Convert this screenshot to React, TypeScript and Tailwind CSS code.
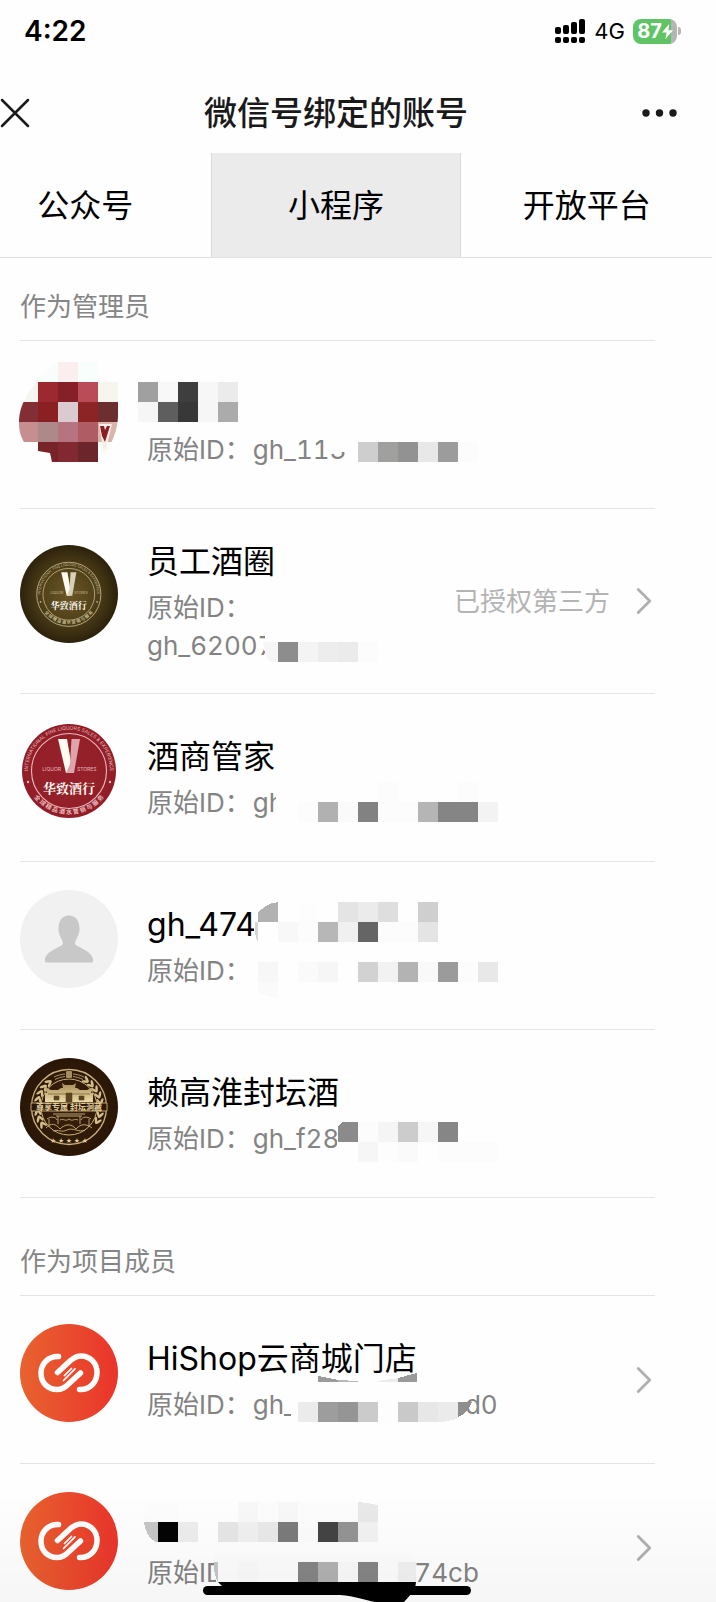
import React, { useState } from 'react';
import { ChevronRight } from 'lucide-react';

const TABS = ['公众号', '小程序', '开放平台'];

// 打码色块：每格 20px，空字符串代表跳过
type Strip = { x: number; y: number; colors: string[] };

function Mosaic({ strips, children }: { strips: Strip[]; children?: React.ReactNode }) {
  return (
    <svg className="absolute top-0 left-0 w-[520px] h-[168px] overflow-visible pointer-events-none" aria-hidden="true" shapeRendering="crispEdges">
      {children}
      {strips.map((s, i) =>
        s.colors.map((c, j) => c && <rect key={`${i}-${j}`} x={s.x + j * 20} y={s.y} width={20} height={20} fill={c} />)
      )}
    </svg>
  );
}

const AVATAR_STRIPS: Strip[] = [
  { x: -2, y: -7, colors: ['#fdfdfa', '#f8fdfb', '#faeeee', '#f8fefb', '#fefefe'] },
  { x: -2, y: 13, colors: ['#f6f5ef', '#9c2830', '#852028', '#b94c57', '#f6f5ee'] },
  { x: -2, y: 33, colors: ['#822e32', '#8b2023', '#dacbd0', '#8c2325', '#6d2e30'] },
  { x: -2, y: 53, colors: ['#c68e8f', '#ae8989', '#b5747f', '#af5d63', '#d9b5ad'] },
  { x: -2, y: 73, colors: ['', '#782327', '#812830', '#6c262b', '#fbfaf5'] },
];

function PixelAvatar() {
  return (
    <svg viewBox="0 0 98 98" className="size-[98px] overflow-visible" aria-hidden="true">
      <clipPath id="pixel-clip">
        <path d="M37 -7C25 1 16 13 9 23C2 34 -1 43 -1 54C-1 62 1 68 4 73H18V82L30 84L32 93H78V73L84 86C92 75 98 60 98 47V-7Z" />
      </clipPath>
      <g clipPath="url(#pixel-clip)">
        {AVATAR_STRIPS.map((s) =>
          s.colors.map((c, j) => c && <rect key={`${s.y}-${j}`} x={s.x + j * 20} y={s.y} width={20} height={20} fill={c} shapeRendering="crispEdges" />)
        )}
        <path d="M79 55H92L86 80H83Z" fill="#f7efe8" />
        <path d="M80 57H84L85 61L87 57H90L85 73L82 67Z" fill="#8b1d27" />
      </g>
    </svg>
  );
}

// 华致酒行徽标，深色和红色两版共用
function WineLogo({ dark }: { dark?: boolean }) {
  const id = dark ? 'dark' : 'red';
  const line = dark ? '#c9bd95' : '#e8b9bc';
  return (
    <svg viewBox="0 0 98 98" className="size-[98px]" role="img" aria-label="华致酒行">
      <defs>
        <radialGradient id={`bg-${id}`}>
          <stop offset="0" stopColor={dark ? '#6a5727' : '#96202b'} />
          <stop offset="0.55" stopColor={dark ? '#514119' : '#94202a'} />
          <stop offset="1" stopColor={dark ? '#2c220c' : '#921d27'} />
        </radialGradient>
        <path id={`top-${id}`} d="M8.500 55A41 41 0 1 1 89.500 55" />
        <path id={`bottom-${id}`} d="M8 65A44.500 44.500 0 0 0 90 65" />
      </defs>
      {dark ? <circle cx="49" cy="49" r="49" fill={`url(#bg-${id})`} /> : <circle cx="49" cy="49" r="47" fill={`url(#bg-${id})`} />}
      <g transform={dark ? 'translate(15 15.500) scale(0.69)' : undefined}>
        {dark && <circle cx="49" cy="49" r="46.500" fill="none" stroke={line} strokeWidth="1.200" />}
        <circle cx="49" cy="49" r="37.500" fill="none" stroke={line} strokeWidth="1.100" />
        <text fontSize="5" fill={line}>
          <textPath href={`#top-${id}`} startOffset="50%" textAnchor="middle">INTERNATIONAL FINE LIQUORS SALES &amp; EXPERIENCE</textPath>
        </text>
        <text fontSize="6" fill={line} className="font-bold">
          <textPath href={`#bottom-${id}`} startOffset="50%" textAnchor="middle">全 球 精 品 酒 水 营 销 与 服 务</textPath>
        </text>
        <circle cx="8" cy="60" r="1.200" fill={line} />
        <circle cx="90" cy="60" r="1.200" fill={line} />
        <path d="M38 17H47L51 40V51H46Z" fill="#fffaf2" />
        <path d="M51.500 17H60L54 51H46L50 42Z" fill={dark ? '#d8d0b4' : '#dfa3ab'} />
        <text x="41" y="49" fontSize="5" textAnchor="end" fill={line}>LIQUOR</text>
        <text x="57" y="49" fontSize="5" fill={line}>STORES</text>
        <text x="49" y="71" fontSize="13" textAnchor="middle" fill="#fffaf2" className="font-['Noto_Serif_CJK_SC','Noto_Sans_CJK_SC',serif] font-bold">华致酒行</text>
      </g>
    </svg>
  );
}

function DefaultAvatar() {
  return (
    <svg viewBox="0 0 98 98" className="size-[98px]" aria-hidden="true">
      <circle cx="49" cy="49" r="49" fill="#f1f1f1" />
      <path d="M49 25.500C42 25.500 38.500 31 38.500 39C38.500 46 43 50 43 53.500C43 57 26 60 25 69.500C24.800 72.500 25.500 72.500 27 72.500H71C72.500 72.500 73.200 72.500 73 69.500C72 60 55 57 55 53.500C55 50 59.500 46 59.500 39C59.500 31 56 25.500 49 25.500Z" fill="#c8c8c8" />
    </svg>
  );
}

function PavilionLogo() {
  // 麦穗叶片沿圆环左右对称排列
  const leaves = [150, 162, 174, 186, 198, 210, 222, 234];
  return (
    <svg viewBox="0 0 98 98" className="size-[98px]" role="img" aria-label="赖高淮封坛酒">
      <defs>
        <radialGradient id="brown">
          <stop offset="0" stopColor="#3a220c" />
          <stop offset="1" stopColor="#2a1606" />
        </radialGradient>
        <linearGradient id="gold" x2="0" y2="1">
          <stop offset="0" stopColor="#a78b57" />
          <stop offset="1" stopColor="#eadba6" />
        </linearGradient>
      </defs>
      <circle cx="49" cy="49" r="49" fill="url(#brown)" />
      <g fill="none" stroke="#c9b07a">
        <circle cx="49" cy="49" r="37.500" strokeWidth="1.300" />
        <circle cx="49" cy="49" r="28" strokeWidth="1" />
        <path d="M34 19C38 17 41 16.500 45 16M35 21.500C39 19.500 42 19 45 18.500M64 19C60 17 57 16.500 53 16M63 21.500C59 19.500 56 19 53 18.500" strokeWidth="0.800" />
      </g>
      {leaves.map((a) => (
        <g key={a} fill="#d3bd88">
          <g transform={`rotate(${a} 49 49)`}>
            <ellipse cx="82" cy="47" rx="1.300" ry="3.600" transform="rotate(28 82 47)" />
            <ellipse cx="79" cy="47" rx="1.200" ry="3.400" transform="rotate(-28 79 47)" />
          </g>
          <g transform={`rotate(${180 - a} 49 49)`}>
            <ellipse cx="82" cy="47" rx="1.300" ry="3.600" transform="rotate(-152 82 47)" />
            <ellipse cx="79" cy="47" rx="1.200" ry="3.400" transform="rotate(152 79 47)" />
          </g>
        </g>
      ))}
      <path d="M46 13H52V20H46ZM48 14V19M50 14V19" fill="#d3bd88" stroke="#3a220c" strokeWidth="0.600" />
      <path d="M42 25L45 27H53L56 25L55 30H43Z M25 29L31 32H38L41 30H57L60 32H67L73 29L71 35H73V44H25V35H27Z" fill="url(#gold)" />
      <path d="M46 35H52V44H46ZM34 38H39V42H34ZM59 38H64V42H59Z M28 36H70" fill="#5b4320" stroke="#5b4320" strokeWidth="0.600" />
      <path d="M11 45H87V53H11Z" fill="#2c1708" stroke="#c9b07a" strokeWidth="0.900" />
      <text x="49" y="52" fontSize="8" textAnchor="middle" fill="#e3d09b" className="font-bold">尊享专属 封坛洞藏</text>
      <g fill="none" stroke="#c9b07a" strokeWidth="0.900">
        <path d="M33 56H65M36 58H62M38 58V66M60 58V66M27 61C31 58 36 59 37 62M71 61C67 58 62 59 61 62M40 62C44 60 45 64 49 61C53 64 54 60 58 62M29 61V69M69 61V69" />
        <path d="M26 70C31 64 36 66 40 71C45 66 51 65 56 71C61 65 67 66 72 70M33 73C39 71 41 75 47 72C53 69 59 75 65 72" />
      </g>
      <text x="49" y="85" fontSize="6" textAnchor="middle" fill="#e3d09b">★ ★ ★ ★ ★</text>
    </svg>
  );
}

function HiShopLogo() {
  return (
    <svg viewBox="0 0 98 98" className="size-[98px]" role="img" aria-label="HiShop">
      <defs>
        <linearGradient id="hishop">
          <stop offset="0" stopColor="#e8632f" />
          <stop offset="1" stopColor="#ea342b" />
        </linearGradient>
      </defs>
      <circle cx="49" cy="49" r="49" fill="url(#hishop)" />
      <g fill="none" stroke="#fff" strokeLinecap="round" strokeLinejoin="round">
        <path d="M38.500 32.500C28 32 21 40 21 49C21 59 28 65.500 37 65.500C42 65.500 44.500 64 47.500 61L60.500 49" strokeWidth="5.500" />
        <path d="M59.500 65.500C70 66 77 58 77 48.500C77 39 70 32 61 32C56 32 53.500 34 50.500 36.500L37.500 48.500" strokeWidth="5.500" />
        <path d="M43.500 56.500L55 44.800" strokeWidth="1.700" />
        <path d="M44.500 51.500L51.500 44.500" strokeWidth="1.700" />
      </g>
    </svg>
  );
}

type Account = {
  key: string;
  avatar: React.ReactNode;
  title?: string;
  wxid: React.ReactNode;
  note?: string;
  link?: boolean;
  wrap?: boolean;
  mask: React.ReactNode;
};

const admins: Account[] = [
  {
    key: 'a1',
    avatar: <PixelAvatar />,
    wxid: 'gh_113',
    mask: (
      <Mosaic
        strips={[
          { x: 118, y: 41, colors: ['#a0a0a0', '#f8f8f8', '#3e3e3e', '#f7f7f7', '#ebebeb'] },
          { x: 118, y: 61, colors: ['#f6f6f6', '#5e5e5e', '#383838', '#f6f6f6', '#ababab'] },
          { x: 338, y: 101, colors: ['#cecece', '#a0a09f', '#929292', '#e8e8e8', '#9c9c9c', '#fcfcfc'] },
        ]}
      >
        <path d="M309 92H350V111H314L309 106Z" fill="#fefefe" />
      </Mosaic>
    ),
  },
  {
    key: 'a2',
    avatar: <WineLogo dark />,
    title: '员工酒圈',
    wxid: 'gh_62007',
    note: '已授权第三方',
    link: true,
    wrap: true,
    mask: (
      <Mosaic strips={[{ x: 258, y: 133, colors: ['#8d8d8d', '#f4f4f4', '#ededed', '#ebebeb', '#fcfcfc'] }]}>
        <path d="M245 124H262V160H245Z" fill="#fefefe" />
        <path d="M243 133H258V153H250C246 149 244 142 243 133Z" fill="#f6f6f6" />
      </Mosaic>
    ),
  },
  {
    key: 'a3',
    avatar: <WineLogo />,
    title: '酒商管家',
    wxid: 'gh_',
    mask: (
      <Mosaic
        strips={[
          { x: 338, y: 88, colors: ['', '#fcfcfc', '', '', '', '#fcfcfc'] },
          { x: 278, y: 108, colors: ['#fcfcfc', '#b1b1b1', '#fafafa', '#828282', '#fcfcfc', '#fcfcfc', '#b5b5b5', '#858585', '#858585', '#f3f3f3'] },
        ]}
      >
        <path d="M256 88H300V130H256Z" fill="#fefefe" />
      </Mosaic>
    ),
  },
  {
    key: 'a4',
    avatar: <DefaultAvatar />,
    title: 'gh_474',
    wxid: '',
    mask: (
      <Mosaic
        strips={[
          { x: 258, y: 40, colors: ['', '#fdfdfd', '', '#e4e4e4', '#ebebeb', '#dedede', '', '#cfcfcf'] },
          { x: 238, y: 60, colors: ['#fefefe', '#f8f8f8', '#fcfcfc', '#b7b7b7', '#f0f0f0', '#656565', '#fcfcfc', '#fcfcfc', '#e4e4e4'] },
          { x: 238, y: 100, colors: ['#f7f7f7', '', '#fafafa', '#f6f6f6', '', '#d2d2d2', '#f2f2f2', '#b3b3b3', '#f9f9f9', '#9b9b9b', '#fcfcfc', '#e8e8e8'] },
        ]}
      >
        <path d="M234 40H260V84H234Z" fill="#fefefe" />
        <path d="M238 60V51C243 45 249 41 258 40V60Z" fill="#b1b1b1" />
        <path d="M235 60H238V80C235 75 234 68 235 60Z" fill="#d5d5d5" />
        <path d="M238 120H258V136C250 135 244 133 238 130Z" fill="#fafafa" />
      </Mosaic>
    ),
  },
  {
    key: 'a5',
    avatar: <PavilionLogo />,
    title: '赖高淮封坛酒',
    wxid: 'gh_f28',
    mask: (
      <Mosaic
        strips={[
          { x: 338, y: 92, colors: ['#fcfcfc', '#f5f5f5', '#cccccc', '#f6f6f6', '#868686'] },
          { x: 338, y: 112, colors: ['#f6f6f6', '#fdfdfd', '#fafafa', '', '#fcfcfc', '#fcfcfc', '#fcfcfc'] },
        ]}
      >
        <path d="M317 92H340V132H317Z" fill="#fefefe" />
        <path d="M318 112V96L322 92H338V112Z" fill="#8b8b8b" />
      </Mosaic>
    ),
  },
];

const members: Account[] = [
  {
    key: 'm1',
    avatar: <HiShopLogo />,
    title: 'HiShop云商城门店',
    wxid: <>gh_<span className="inline-block w-[169px]" />d0</>,
    link: true,
    mask: (
      <Mosaic strips={[{ x: 278, y: 106, colors: ['#ebebeb', '#9d9d9d', '#959595', '#cbcbcb', '#fdfdfd', '#c9c9c9', '#e7e7e7'] }]}>
        <path d="M271 88H298V128H271Z" fill="#fefefe" />
        <path d="M298 80L318 84V86H298Z" fill="#9b9b9b" />
        <path d="M318 84L338 85V86H318Z" fill="#b8b8b8" />
        <path d="M358 85L378 82V86H358Z" fill="#ececec" />
        <path d="M378 82L397 77V86H378Z" fill="#9a9a9a" />
        <path d="M418 106H438V122C431 125 425 126 418 126Z" fill="#ebebeb" />
        <path d="M438 106H452C450 113 444 119 438 121Z" fill="#8e8e8e" />
      </Mosaic>
    ),
  },
  {
    key: 'm2',
    avatar: <HiShopLogo />,
    wxid: <><span className="inline-block w-[152px]" />f74cb</>,
    link: true,
    mask: (
      <Mosaic
        strips={[
          { x: 138, y: 38, colors: ['#fcfcfc', '#fefefe', '', '', '#f8f8f8', '#fcfcfc', '#f8f8f8', '#fcfcfc', '#fcfcfc', '#fcfcfc'] },
          { x: 138, y: 58, colors: ['#050505', '#ededed', '#fefefe', '#e6e6e6', '#f0f0f0', '#e9e9e9', '#7b7b7b', '#fbfbfb', '#444444', '#949494', '#f2f2f2'] },
          { x: 198, y: 98, colors: ['#fcfcfc', '#f9f9f9', '#fcfcfc', '#fcfcfc', '#858585', '#b1b1b1', '#f8f8f8', '#858585', '#fcfcfc'] },
        ]}
      >
        <path d="M194 90H390L396 98V120H196Z" fill="#fcfcfc" />
        <path d="M138 38H130C126 44 124 50 124 58H138Z" fill="#fcfcfc" />
        <path d="M124 58H138V78H136C129 75 125 67 124 58Z" fill="#c6c6c6" />
        <path d="M338 38C345 38 352 40 358 41V58H338Z" fill="#e9e9e9" />
        <path d="M194 98H198V118C195 112 193 105 194 98Z" fill="#c6c6c6" />
        <path d="M378 98H396V118H378Z" fill="#f0f0f0" />
      </Mosaic>
    ),
  },
];

function AccountRow({ item }: { item: Account }) {
  const body = (
    <>
      <div className="shrink-0 mb-3.5">{item.avatar}</div>
      <div className={`flex-1 ml-[29px] ${item.wrap ? 'pt-[26px] pb-7' : 'pb-1'}`}>
        <h3 className="text-[32px] leading-[54px] h-[54px] text-black whitespace-nowrap">{item.title}</h3>
        <p className="text-[26px] leading-[38px] text-[#838383] tabular-nums">
          原始ID：{item.wrap ? <><br />{item.wxid}</> : <span className="ml-0.5">{item.wxid}</span>}
        </p>
      </div>
      {item.note && <span className="mr-[11px] text-[26px] text-[#b4b4b4]">{item.note}</span>}
      {item.link && <ChevronRight size={46} strokeWidth={1.5} className="-mr-3 text-[#b0b0b0]" />}
      {item.mask}
    </>
  );
  const row = 'relative flex items-center min-h-[168px] border-b border-[#e4e4e4]';
  return <li>{item.link ? <a href="#detail" className={row}>{body}</a> : <div className={row}>{body}</div>}</li>;
}

function Section({ title, items }: { title: string; items: Account[] }) {
  return (
    <section className="pl-15 pr-[57px] pb-[15px]">
      <h2 className="pt-[30px] pb-[14px] text-[26px] leading-[38px] text-[#858585] border-b border-[#e4e4e4]">{title}</h2>
      <ul>
        {items.map((item) => <AccountRow key={item.key} item={item} />)}
      </ul>
    </section>
  );
}

export default function App() {
  const [tab, setTab] = useState('小程序');

  return (
    <div className="h-screen overflow-hidden bg-[#fefefe] font-['Inter','Noto_Sans_CJK_SC',sans-serif] text-black">
      {/* 页面整体向左溢出一截 */}
      <div className="-ml-10 mr-1">
        <div className="flex items-center justify-between h-[62px] pl-16 pr-[31px]">
          <span className="text-[28px] font-semibold">4:22</span>
          <div className="flex items-center gap-2">
            <svg viewBox="0 0 31 25" className="w-[31px] h-[25px]" aria-hidden="true">
              <rect x="0" y="8" width="6" height="7" rx="2" />
              <rect x="8" y="6" width="6" height="9" rx="2" />
              <rect x="16" y="3" width="6" height="12" rx="2" />
              <rect x="24" y="0" width="6" height="15" rx="2" />
              <rect x="0" y="18" width="6" height="6" rx="2" />
              <rect x="8" y="18" width="6" height="6" rx="2" />
              <rect x="16" y="18" width="6" height="6" rx="2" />
              <rect x="24" y="18" width="6" height="6" rx="2" />
            </svg>
            <span className="text-[22px]">4G</span>
            <div className="flex items-center">
              <div className="flex items-center justify-center w-11 h-[25px] rounded-lg bg-linear-to-r from-[#5fc466] from-87% to-[#b5b5b5] to-87% text-white">
                <span className="text-[20px] leading-6 font-bold">87</span>
                <svg viewBox="0 0 12 17" className="w-[11px] h-[17px]" fill="#fff" aria-hidden="true"><path d="M8 0L0 9.500H5L3.500 17L12 7H7Z" /></svg>
              </div>
              <span className="w-[3px] h-2 ml-px rounded-r-full bg-[#b5b5b5]" />
            </div>
          </div>
        </div>

        <header className="flex items-center justify-between h-[91px] pl-10 pr-[35px] pt-4 pb-1.5">
          <button aria-label="关闭" className="w-[30px]">
            <svg viewBox="0 0 30 30" className="size-[30px]" stroke="#1a1a1a" strokeWidth="2.500" strokeLinecap="round" aria-hidden="true"><path d="M2 2L28 28M28 2L2 28" /></svg>
          </button>
          <h1 className="text-[33px] leading-[48px] font-medium text-[#1a1a1a]">微信号绑定的账号</h1>
          <button aria-label="更多" className="w-[35px]">
            <svg viewBox="0 0 35 8" className="w-[35px] h-2" fill="#1a1a1a" aria-hidden="true">
              <circle cx="4" cy="4" r="3.700" /><circle cx="17.500" cy="4" r="3.700" /><circle cx="31" cy="4" r="3.700" />
            </svg>
          </button>
        </header>

        <nav className="grid grid-cols-3 border-b border-[#e0e0e0]">
          {TABS.map((t) => (
            <button key={t} onClick={() => setTab(t)} className={`h-[104px] pt-0.5 text-[32px] ${tab === t ? 'bg-[#ebebeb] border-x border-[#d9d9d9]' : ''}`}>
              {t}
            </button>
          ))}
        </nav>

        <Section title="作为管理员" items={admins} />
        <Section title="作为项目成员" items={members} />
      </div>

      {/* 底部横条 */}
      <div className="fixed inset-x-0 bottom-0 h-[20px] pointer-events-none">
        <svg className="absolute bottom-0 left-[200px] w-[274px] h-[20px]" aria-hidden="true">
          <rect x="3" y="4" width="268" height="9" rx="4.500" />
          <path d="M18 0H216L215 7L212 11L204 20H175C165 18 155 14 140 13L24 6Z" />
        </svg>
      </div>
      <div className="fixed inset-x-0 bottom-0 h-[110px] bg-linear-to-b from-transparent to-black/3 pointer-events-none" />
    </div>
  );
}
